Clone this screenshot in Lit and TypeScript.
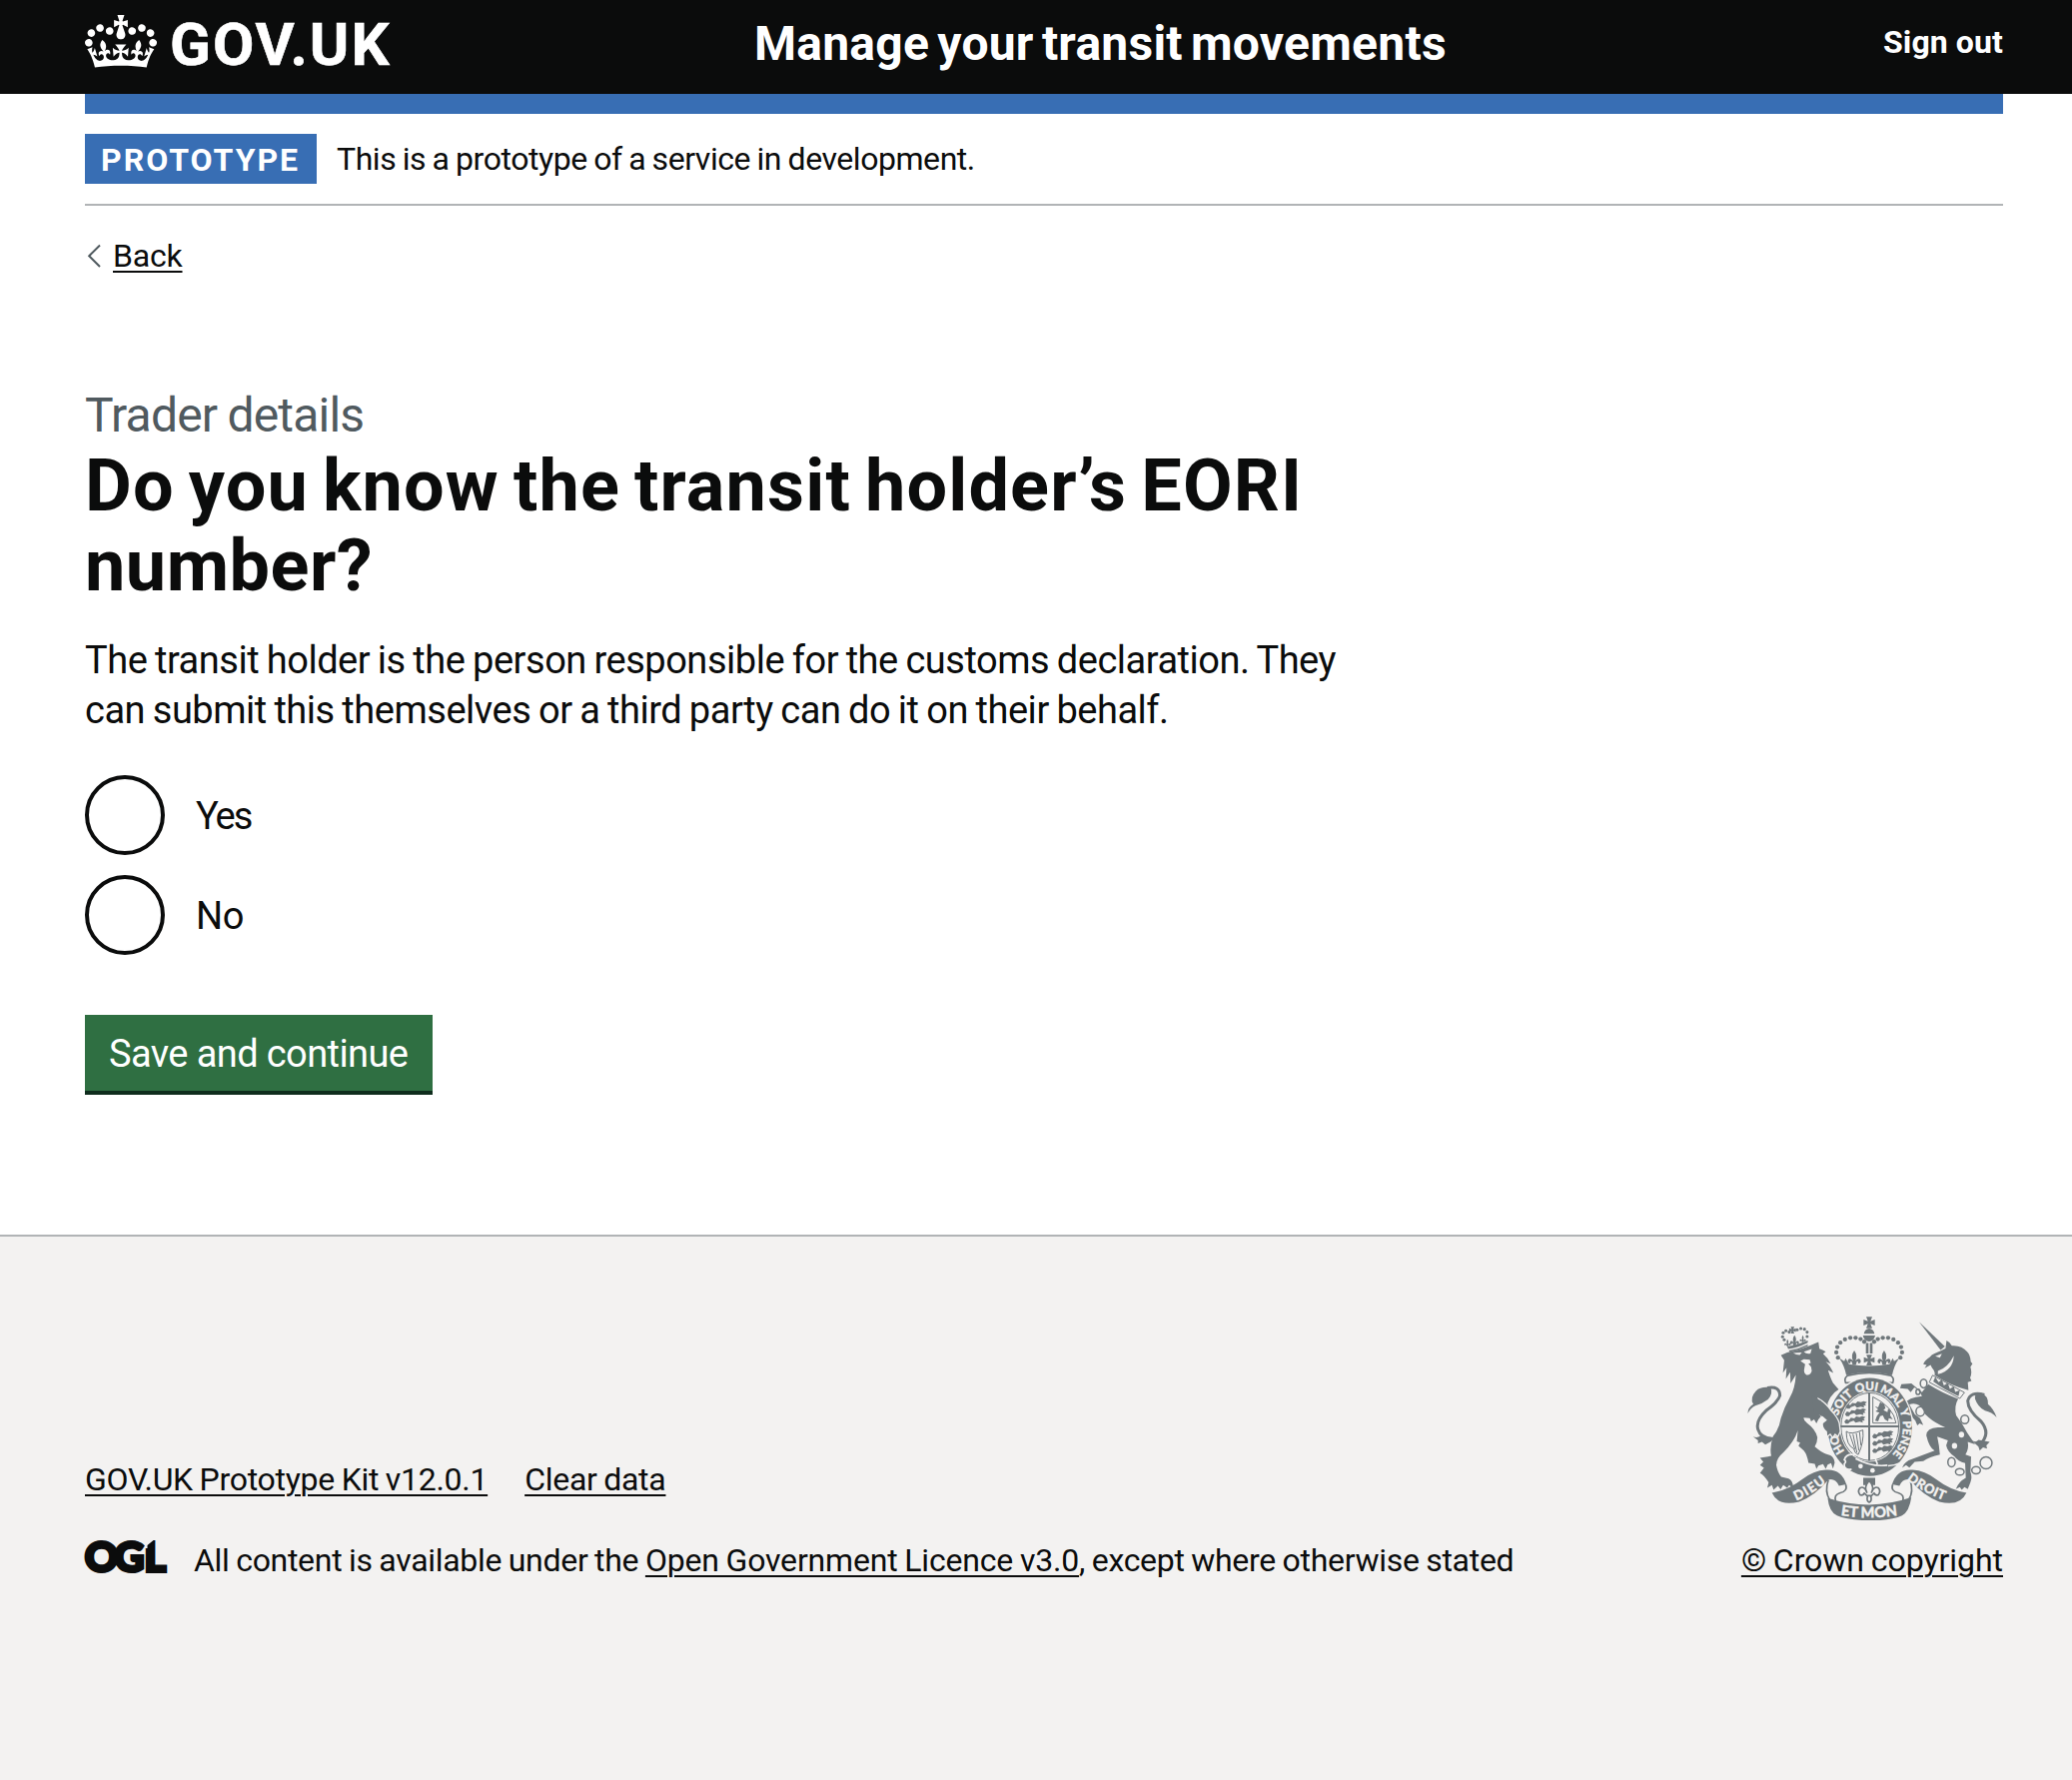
import { LitElement, html, svg, css } from "lit";
import { customElement, state } from "lit/decorators.js";

const CROWN =
  "M25 30.2c3.5 1.5 7.7-.2 9.1-3.7 1.5-3.6-.2-7.8-3.9-9.2-3.6-1.4-7.6.3-9.1 3.9-1.4 3.5.3 7.5 3.9 9zM9 39.5c3.6 1.5 7.8-.2 9.2-3.7 1.5-3.6-.2-7.8-3.9-9.1-3.6-1.5-7.6.2-9.1 3.8-1.4 3.5.3 7.5 3.8 9zM4.4 57.2c3.5 1.5 7.7-.2 9.1-3.8 1.5-3.6-.2-7.7-3.9-9.1-3.5-1.5-7.6.3-9.1 3.8-1.4 3.5.3 7.6 3.9 9.1zm38.3-21.4c3.5 1.5 7.7-.2 9.1-3.8 1.5-3.6-.2-7.7-3.9-9.1-3.6-1.5-7.6.3-9.1 3.8-1.3 3.6.4 7.7 3.9 9.1zm64.4-5.6c-3.6 1.5-7.8-.2-9.1-3.7-1.5-3.6.2-7.8 3.8-9.2 3.6-1.4 7.7.3 9.2 3.9 1.3 3.5-.4 7.5-3.9 9zm15.9 9.3c-3.6 1.5-7.7-.2-9.1-3.7-1.5-3.6.2-7.8 3.7-9.1 3.6-1.5 7.7.2 9.2 3.8 1.5 3.5-.3 7.5-3.8 9zm4.7 17.7c-3.6 1.5-7.8-.2-9.2-3.8-1.5-3.6.2-7.7 3.9-9.1 3.6-1.5 7.7.3 9.2 3.8 1.3 3.5-.4 7.6-3.9 9.1zM89.3 35.8c-3.6 1.5-7.8-.2-9.2-3.8-1.4-3.6.2-7.7 3.9-9.1 3.6-1.5 7.7.3 9.2 3.8 1.4 3.6-.3 7.7-3.9 9.1zM69.7 17.7l8.9 4.7V9.3l-8.9 2.8c-.2-.3-.5-.6-.9-.9L72.4 0H59.6l3.5 11.2c-.3.3-.6.5-.9.9l-8.8-2.8v13.1l8.8-4.7c.3.3.6.7.9.9l-5 15.4v.1c-.2.8-.4 1.6-.4 2.4 0 4.1 3.1 7.5 7 8.1h.2c.3 0 .7.1 1 .1.4 0 .7 0 1-.1h.2c4-.6 7.1-4.1 7.1-8.1 0-.8-.1-1.7-.4-2.4V34l-5.1-15.4c.4-.2.7-.6 1-.9zM66 92.8c16.9 0 32.8 1.1 47.1 3.2 4-16.9 8.9-26.7 14-33.5l-9.6-3.4c1 4.9 1.1 7.2 0 10.2-1.5-1.4-3-4.3-4.2-8.7L108.6 76c2.8-2 5-3.2 7.5-3.3-4.4 9.4-10 11.9-13.6 11.2-4.3-.8-6.3-4.6-5.6-7.9 1-4.7 5.7-5.9 8-.5 4.3-8.7-3-11.4-7.6-8.8 7.1-7.2 7.9-13.5 2.1-21.1-8 6.1-8.1 12.3-4.5 20.8-4.7-5.4-12.1-2.5-9.5 6.2 3.4-5.2 7.9-2 7.2 3.1-.6 4.3-6.4 7.8-13.5 7.2-10.3-.9-10.9-8-11.2-13.8 2.5-.5 7.1 1.8 11 7.3L80.2 60c-4.1 4.4-8 5.3-12.3 5.4 1.4-4.4 8-11.6 8-11.6H55.5s6.4 7.2 7.9 11.6c-4.2-.1-8-1-12.3-5.4l1.4 16.4c3.9-5.5 8.5-7.7 10.9-7.3-.3 5.8-.9 12.8-11.1 13.8-7.2.6-12.9-2.9-13.5-7.2-.7-5 3.8-8.3 7.1-3.1 2.7-8.7-4.6-11.6-9.4-6.2 3.7-8.5 3.6-14.7-4.6-20.8-5.8 7.6-5 13.9 2.2 21.1-4.7-2.6-11.9.1-7.7 8.8 2.3-5.5 7.1-4.2 8.1.5.7 3.3-1.3 7.1-5.7 7.9-3.5.7-9-1.8-13.5-11.2 2.5.1 4.7 1.3 7.5 3.3l-4.7-15.4c-1.2 4.4-2.7 7.2-4.3 8.7-1.1-3-.9-5.3 0-10.2l-9.5 3.4c5 6.9 9.9 16.7 14 33.5 14.8-2.1 30.8-3.2 47.7-3.2z";

type Point = [number, number];

const ARCH: Point[] = [[299, 176], [294, 160], [297, 144], [306, 131], [320, 121], [336, 116], [352, 116], [367, 120], [378, 128]];
const PEARLS: Point[] = [[137, 122], [132, 113], [134, 101], [142, 95], [152, 99], [176, 92], [187, 88], [198, 90], [206, 99], [206, 112]];
const RINGS: number[][] = [[557, 254, 10, 13], [540, 279, 6, 8], [547, 338, 13, 14], [681, 362, 12, 13], [641, 491, 11, 14], [666, 520, 13, 10], [715, 515, 13, 11], [745, 493, 18, 18]];
const GUARDS: Point[] = [[322, 316], [320, 338], [318, 361], [402, 405], [402, 427], [402, 449]];
const MOTTO: [string, number][] = [["HO", 17.4], ["SOIT", 36], ["QUI", 48.6], ["MAL", 60.2], ["Y", 69], ["PENSE", 80.4]];

const cross = (x: number, y: number, s: number) => svg`
  <path transform="translate(${x} ${y}) scale(${s})" d="M-9-17H9L4-4 17-9V9L4 4 9 17H-9L-4 4-17 9V-9L-4-4Z"/>`;
const fleur = (x: number, y: number, s: number) => svg`
  <path transform="translate(${x} ${y}) scale(${s})" d="M0-24Q-10-10-3 3Q-14-8-17 3Q-18 10-10 10Q-12 4-7 5L-4 14H4L7 5Q12 4 10 10Q18 10 17 3Q14-8 3 3Q10-10 0-24Z"/>`;

const coatOfArms = svg`
<svg class="arms" viewBox="27 52 750 614" aria-hidden="true">
  <defs>
    <path id="motto" pathLength="100" d="M395 496A100 111 0 0 1 395 274A100 111 0 0 1 395 496"/>
    <path id="dieu" d="M173 607Q220 588 272 545"/>
    <path id="mon" d="M307 651Q393 665 481 651"/>
    <path id="droit" d="M506 543Q560 586 628 609"/>
  </defs>
  <g class="ink">
    <!-- lion -->
    ${PEARLS.map(([x, y]) => svg`<circle cx=${x} cy=${y} r="4.6"/>`)}
    ${cross(162, 93, 0.6)} ${fleur(168, 128, 0.8)} ${fleur(147, 134, 0.55)} ${fleur(193, 122, 0.55)}
    <path d="M146 142Q175 138 208 124L208 131Q176 147 149 150ZM151 154Q180 150 208 136V141Q180 154 153 159Z"/>
    <path d="M127 169L146 160Q190 152 240 129L243 149Q256 153 262 158L254 164Q268 176 277 194L262 188Q276 200 285 222L269 214Q277 240 284 252L301 272Q286 280 276 296L268 312L266 364L250 350L240 362L234 374L227 362L218 368L214 358L196 357Q194 364 206 373Q232 392 237 416Q237 430 229 444Q250 462 262 466L276 470Q288 476 289 493L284 510L278 494L268 498L262 511L254 497L240 501L234 511L229 496L210 493Q206 468 196 456L180 442L185 432L175 428L178 395Q168 428 134 462Q114 478 113 500Q117 522 128 535L150 540Q165 548 163 568L152 560L146 568L134 560L126 573L118 562L105 574L100 560L86 568L90 552Q76 530 64 524L76 508L64 500L74 490L64 478L88 474L98 472Q92 446 104 412Q122 390 127 358Q136 328 154 296Q170 268 172 228L156 254L155 220L142 240L144 206L133 222L137 184Z"/>
    <path d="M27 344Q28 325 44 316Q32 298 52 276Q66 262 96 266Q104 286 88 302Q70 316 50 321Q36 328 27 344Z"/>
    <path class="line tail" d="M86 267Q124 260 124 290Q118 310 84 334Q50 366 58 392Q66 418 100 420"/>
    <path d="M43 414Q60 420 68 408Q84 422 108 414L98 428L80 438L70 430L58 434L58 425Z"/>

    <!-- crown -->
    ${cross(393, 70, 1)}
    <path d="M377 104Q380 89 393 88Q406 89 409 104ZM374 109H411Q408 126 393 127Q377 126 374 109ZM383 132H391V163H383ZM395 132H403V163H395Z"/>
    ${ARCH.map(([x, y]) => svg`<circle cx=${x} cy=${y} r="6.4"/><circle cx=${786 - x} cy=${y} r="6.4"/>`)}
    ${cross(393, 183, 0.95)} ${fleur(348, 182, 1.15)} ${fleur(438, 182, 1.15)}
    <path d="M303 178L318 187L322 178L332 196Q393 206 454 196L464 178L468 187L483 178Q468 200 462 229Q393 214 324 229Q318 200 303 178Z"/>
    <path class="line" d="M328 230Q393 214 458 230Q470 238 464 252H322Q316 238 328 230Z"/>

    <!-- unicorn -->
    <path d="M543 68L621 142L608 153Z"/>
    <path d="M609 155L623 148L626 124Q638 130 642 140Q672 138 688 158Q698 168 699 188L704 194L698 204Q704 222 697 236L701 246L690 250L692 274Q640 262 590 229Q593 218 582 206L578 198L560 208L566 198L556 196Q560 184 576 174Q580 166 590 163Z"/>
    <path class="line thin paper" d="M584 229L680 281L666 299L574 250Z"/>
    <path d="M586 248L592 234L602 250L612 242L618 260L630 252L636 270L648 262L652 279L666 274L662 292Q620 274 586 248Z"/>
    <path d="M571 256Q615 284 661 300Q648 322 655 350Q674 374 688 402L712 437L690 430Q694 452 683 468L700 474L698 520Q704 536 698 552L690 572L680 566L672 574L666 566L654 572Q662 550 684 538L682 494Q660 488 650 474Q628 458 625 440L630 425L598 414Q604 440 606 468Q574 474 556 488L530 490L514 507L504 500L492 508Q500 488 522 482L590 456Q574 448 565 410Q566 388 600 386L622 386Q590 372 572 356Q560 348 556 334Q540 308 514 317L530 346L546 358L556 379L545 374L538 380L532 366Q512 344 500 315Q510 296 552 292Q544 274 529 266L518 280L509 270L486 268L490 256L520 254L552 280Z"/>
    <path class="line tail" d="M740 288Q698 276 690 306Q690 334 730 368Q760 404 728 436"/>
    <path d="M712 300Q708 284 730 282Q752 290 751 316Q768 330 777 356Q762 340 742 336Q720 324 712 300ZM700 424Q714 434 722 424L756 430L746 440L748 450L736 446L726 456L722 444Z"/>

    <!-- ribbon -->
    <path class="line" d="M322 558Q330 578 304 584Q286 590 292 608M270 544Q258 580 274 604M464 558Q456 578 482 584Q500 590 494 608M516 544Q528 580 512 604"/>
    <path d="M100 583Q150 574 190 543Q226 516 262 514Q310 510 324 558L302 562Q290 538 270 544Q230 592 182 610Q120 626 100 583ZM686 583Q636 574 596 543Q560 516 524 514Q476 510 462 558L484 562Q496 538 516 544Q556 592 604 610Q666 626 686 583Z"/>
    <path d="M268 599Q330 619 393 619Q456 619 520 597Q514 640 492 652Q460 667 393 667Q326 665 296 652Q272 640 268 599Z"/>

    <!-- garter and shield -->
    <ellipse class="halo" cx="395" cy="385" rx="127" ry="148"/>
    <ellipse class="paper" cx="395" cy="384" rx="91" ry="106"/>
    <path d="M390 281H396V486H390ZM306 380H484V386H306Z"/>
    <ellipse class="line hair" cx="395" cy="384" rx="87" ry="102"/>
    ${GUARDS.map(([x, y]) => svg`
      <path transform="translate(${x} ${y})" d="M0 8L6 0L14 3L20-4L30-2L36-8L46-6L54-9L64-6L58-1L62 4L54 5L56 11L46 8L34 11L28 5L16 9L12 14L4 14Z"/>`)}
    <path class="line hair" d="M404 294V373H474Q466 324 404 294Z"/>
    <path d="M410 322L420 326L426 310L438 316L442 328L436 334L448 340L450 330L458 336L456 350L464 362L452 358L450 368L440 362L434 350L426 352L420 368L411 366L416 352L424 342L412 338L420 332Z"/>
    <path class="line thin" d="M324 398Q336 410 374 394Q378 430 360 468Q350 466 346 450Q324 440 324 398M334 406L350 452M344 406L356 462M354 404L362 456M364 400L368 440"/>
    <path class="cut" d="M352 480Q400 506 448 500M418 497L412 482M450 502Q474 500 490 492"/>
    <circle class="paper" cx="367" cy="503" r="7"/><circle class="paper" cx="403" cy="516" r="7"/>
    <path class="cut" d="M356 470Q324 462 318 484Q326 488 318 496Q316 516 340 512"/>

    <!-- fleur-de-lis -->
    <path d="M375 538H411V560H375Z"/>
    <path class="line paper" d="M393 546Q376 566 386 582Q378 562 366 568Q356 578 366 590Q376 592 378 584L386 592H400L408 584Q410 592 420 590Q430 578 420 568Q408 562 400 582Q410 566 393 546ZM388 594Q384 608 393 612Q402 608 398 594"/>

    ${RINGS.map(([x, y, a, b]) => svg`<ellipse class="line ring" cx=${x} cy=${y} rx=${a} ry=${b}/>`)}
  </g>
  <g class="paper">
    <path d="M164 162L190 160L184 168Q172 168 164 162ZM196 158L220 150L216 163Q204 166 196 158ZM186 186L196 181L214 182L217 192L210 194L218 204L220 216Q216 230 204 228Q194 222 198 206L200 196Z"/>
    <path d="M592 172L612 164L606 176ZM600 226Q646 214 648 170Q630 206 600 216Z"/>
    <ellipse cx="671" cy="408" rx="8" ry="9"/><ellipse cx="650" cy="442" rx="8" ry="9"/>
  </g>
  <g class="words">
    ${MOTTO.map(([word, at]) => svg`
      <text class="motto" text-anchor="middle"><textPath href="#motto" startOffset="${at}%">${word}</textPath></text>`)}
    <text><textPath href="#dieu" textLength="106">DIEU</textPath></text>
    <text class="mon"><textPath href="#mon" textLength="172">ET MON</textPath></text>
    <text><textPath href="#droit" textLength="128">DROIT</textPath></text>
  </g>
  <!-- foreleg resting on the garter -->
  <path class="ink halo" d="M242 303Q262 314 276 336Q296 356 301 374L304 398L298 411L290 404L283 414L276 404L267 411L266 398Q252 388 254 374L266 364L246 346Z"/>
  <path class="ink" d="M220 290L248 306L262 350L250 352L226 340Z"/>
</svg>`;

@customElement("app-root")
export class AppRoot extends LitElement {
  static styles = css`
    :host {
      display: flex;
      flex-direction: column;
      min-height: 1782px;
      background: #fff;
      color: #0b0c0c;
      font-family: Roboto, "Liberation Sans", sans-serif;
      font-size: 32px;
      line-height: 40px;
      letter-spacing: -0.45px;
      word-spacing: -1px;
    }
    * { box-sizing: border-box; }
    a {
      color: inherit;
      text-decoration: underline;
      text-decoration-thickness: 2px;
      text-underline-offset: 4px;
    }
    .width { margin: 0 69px 0 85px; }
    .header { background: #0b0c0c; color: #fff; height: 94px; font-weight: 700; }
    .header .width { display: flex; align-items: flex-start; }
    .logo { display: flex; width: 670px; font-size: 60px; line-height: 89px; letter-spacing: 2px; -webkit-text-stroke: 0.6px #fff; }
    .crown { width: 72px; height: 53px; margin: 15px 13px 0 0; fill: #fff; }
    .service { flex: 1; font-size: 48px; line-height: 87px; letter-spacing: 0.25px; word-spacing: -4px; }
    .signout { line-height: 84px; letter-spacing: 0.1px; word-spacing: 0; }
    .bar { height: 20px; background: #386eb4; }
    .phase {
      display: flex;
      gap: 20px;
      padding: 20px 0;
      border-bottom: 2px solid #b1b4b6;
      line-height: 50px;
    }
    .tag {
      width: 232px;
      height: 50px;
      padding-left: 16px;
      background: #386eb4;
      color: #fff;
      font-weight: 700;
      line-height: 52px;
      letter-spacing: 2px;
    }
    .back { display: flex; align-items: center; margin-top: 30px; }
    .back svg { width: 28px; height: 40px; fill: none; stroke: #505a5f; stroke-width: 2; }
    .back a { letter-spacing: -0.2px; }
    .main { flex: none; height: 960px; padding-top: 110px; }
    .caption { font-size: 48px; line-height: 60px; letter-spacing: -0.8px; color: #505a5f; }
    h1 { margin: 0 0 29px; padding-top: 1px; font-size: 72px; line-height: 80px; letter-spacing: 1.15px; word-spacing: -5px; }
    .short { letter-spacing: 0.5px; }
    p { margin: 0 0 40px; font-size: 38px; line-height: 50px; letter-spacing: -0.48px; word-spacing: -1.3px; }
    .radios { display: flex; flex-direction: column; gap: 20px; margin-bottom: 60px; font-size: 38px; }
    .radio { display: flex; gap: 31px; height: 80px; line-height: 82px; }
    .radio.yes { letter-spacing: -2px; }
    .radio input {
      appearance: none;
      width: 80px;
      height: 80px;
      margin: 0;
      border: 4px solid #0b0c0c;
      border-radius: 50%;
    }
    .radio input:checked { box-shadow: inset 0 0 0 16px #fff; background: #0b0c0c; }
    .button {
      display: block;
      width: 348px;
      height: 80px;
      padding: 2px 0 0 24px;
      border: 0;
      border-bottom: 4px solid #0f2d1d;
      background: #2f6f42;
      color: #fff;
      font: 400 38px/74px Roboto, "Liberation Sans", sans-serif;
      letter-spacing: -0.6px;
      text-align: left;
      white-space: nowrap;
    }
    .footer { flex: 1; border-top: 2px solid #b1b4b6; background: #f3f2f1; padding-top: 80px; }
    .footer .width { display: flex; justify-content: space-between; align-items: flex-end; }
    .links { display: flex; gap: 37px; margin-bottom: 41px; letter-spacing: -0.28px; }
    .licence { display: flex; letter-spacing: -0.3px; }
    .licence a { letter-spacing: -0.18px; }
    .ogl { width: 82px; height: 34px; margin-right: 27px; overflow: visible; }
    .ogl text { font: 700 41px Lato, sans-serif; letter-spacing: 0; fill: #0b0c0c; stroke: #0b0c0c; stroke-width: 4; stroke-linejoin: miter; }
    .copyright { display: flex; flex-direction: column; align-items: flex-end; gap: 20px; letter-spacing: -0.05px; }
    .arms { display: block; width: 250px; height: 204px; margin-right: 6px; }
    .ink { fill: #6f777b; }
    .line { fill: none; stroke: #6f777b; stroke-width: 5; stroke-linejoin: round; }
    .tail { stroke-width: 9; }
    .thin { stroke-width: 3; }
    .hair { stroke-width: 3; }
    .ring { stroke-width: 4.5; }
    .halo { stroke: #f3f2f1; stroke-width: 8; paint-order: stroke; }
    .paper { fill: #f3f2f1; }
    .cut { fill: none; stroke: #f3f2f1; stroke-width: 5; }
    .words { fill: #f3f2f1; stroke: #f3f2f1; stroke-width: 1.4; font: 700 39px Lato, sans-serif; letter-spacing: 0; word-spacing: 0; }
    .motto { font-size: 35px; }
    .mon { font-size: 44px; }
  `;

  @state() private answer = "";

  private radio(label: string) {
    return html`<label class="radio ${label.toLowerCase()}">
      <input type="radio" name="eori" .checked=${this.answer === label} @change=${() => (this.answer = label)} />
      <span>${label}</span>
    </label>`;
  }

  render() {
    return html`
      <header class="header">
        <div class="width">
          <div class="logo">
            <svg class="crown" viewBox="0 0 132 97" preserveAspectRatio="none"><path d=${CROWN} /></svg>
            <span>GOV.UK</span>
          </div>
          <span class="service">Manage your transit movements</span>
          <span class="signout">Sign out</span>
        </div>
      </header>
      <div class="width">
        <div class="bar"></div>
        <div class="phase">
          <strong class="tag">PROTOTYPE</strong>
          <span>This is a prototype of a service in development.</span>
        </div>
        <div class="back">
          <svg viewBox="0 0 28 40"><path d="M15 9.5L4.2 20.2L15 31" /></svg>
          <a>Back</a>
        </div>
      </div>
      <main class="main width">
        <div class="caption">Trader details</div>
        <h1>Do you know the transit holder’s EORI<br /><span class="short">number?</span></h1>
        <p>
          The transit holder is the person responsible for the customs declaration. They<br />
          can submit this themselves or a third party can do it on their behalf.
        </p>
        <div class="radios">${this.radio("Yes")} ${this.radio("No")}</div>
        <button class="button">Save and continue</button>
      </main>
      <footer class="footer">
        <div class="width">
          <div>
            <div class="links"><a>GOV.UK Prototype Kit v12.0.1</a><a>Clear data</a></div>
            <div class="licence">
              <svg class="ogl" viewBox="0 0 82 34">
                <text x="0 29.5 59.5" y="31">OGL</text>
                <path class="paper" d="M60 -2H71L62.5 5V8H60Z" />
              </svg>
              <span>All content is available under the <a>Open Government Licence v3.0</a>, except where otherwise stated</span>
            </div>
          </div>
          <div class="copyright">${coatOfArms}<a>© Crown copyright</a></div>
        </div>
      </footer>
    `;
  }
}
